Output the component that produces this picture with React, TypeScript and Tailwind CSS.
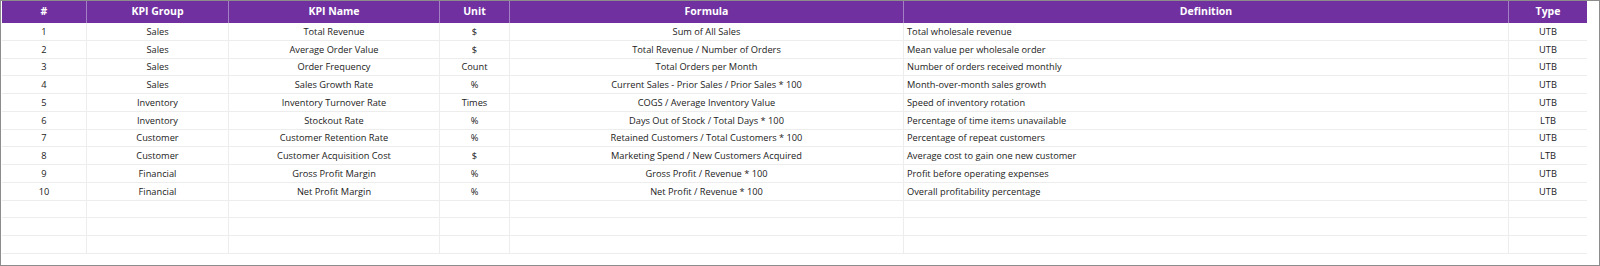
import React from "react";

const rows = [
  ["1", "Sales", "Total Revenue", "$", "Sum of All Sales", "Total wholesale revenue", "UTB"],
  ["2", "Sales", "Average Order Value", "$", "Total Revenue / Number of Orders", "Mean value per wholesale order", "UTB"],
  ["3", "Sales", "Order Frequency", "Count", "Total Orders per Month", "Number of orders received monthly", "UTB"],
  ["4", "Sales", "Sales Growth Rate", "%", "Current Sales - Prior Sales / Prior Sales * 100", "Month-over-month sales growth", "UTB"],
  ["5", "Inventory", "Inventory Turnover Rate", "Times", "COGS / Average Inventory Value", "Speed of inventory rotation", "UTB"],
  ["6", "Inventory", "Stockout Rate", "%", "Days Out of Stock / Total Days * 100", "Percentage of time items unavailable", "LTB"],
  ["7", "Customer", "Customer Retention Rate", "%", "Retained Customers / Total Customers * 100", "Percentage of repeat customers", "UTB"],
  ["8", "Customer", "Customer Acquisition Cost", "$", "Marketing Spend / New Customers Acquired", "Average cost to gain one new customer", "LTB"],
  ["9", "Financial", "Gross Profit Margin", "%", "Gross Profit / Revenue * 100", "Profit before operating expenses", "UTB"],
  ["10", "Financial", "Net Profit Margin", "%", "Net Profit / Revenue * 100", "Overall profitability percentage", "UTB"],
  ["", "", "", "", "", "", ""],
  ["", "", "", "", "", "", ""],
  ["", "", "", "", "", "", ""],
];

const headers = ["#", "KPI Group", "KPI Name", "Unit", "Formula", "Definition", "Type"];

const gridCols = "grid grid-cols-[85px_142px_211px_70px_394px_605px_78px]";

export default function App() {
  return (
    <div
      className="w-[1600px] h-[266px] bg-white border border-[#8c8c8c] pl-[1px] overflow-hidden"
      style={{ fontFamily: '"Open Sans", "Liberation Sans", Arial, sans-serif' }}
    >
      <div className="w-[1585px]">
        <div className={`${gridCols} h-[22px] bg-[#7030a0] text-white font-bold text-[10.5px]`}>
          {headers.map((h, i) => (
            <div
              key={i}
              className={`flex items-center justify-center ${i < headers.length - 1 ? "border-r border-[#a37fc4]" : ""}`}
            >
              {h}
            </div>
          ))}
        </div>
        {rows.map((r, ri) => (
          <div key={ri} className={`${gridCols} h-[17.75px] text-[9.25px] text-[#222222]`}>
            {r.map((c, ci) => (
              <div
                key={ci}
                className={`flex items-center pt-[1px] border-b border-[#ededed] ${ci < r.length - 1 ? "border-r" : ""} ${
                  ci === 5 ? "justify-start pl-[3px]" : "justify-center"
                } whitespace-nowrap`}
              >
                {c}
              </div>
            ))}
          </div>
        ))}
      </div>
    </div>
  );
}
